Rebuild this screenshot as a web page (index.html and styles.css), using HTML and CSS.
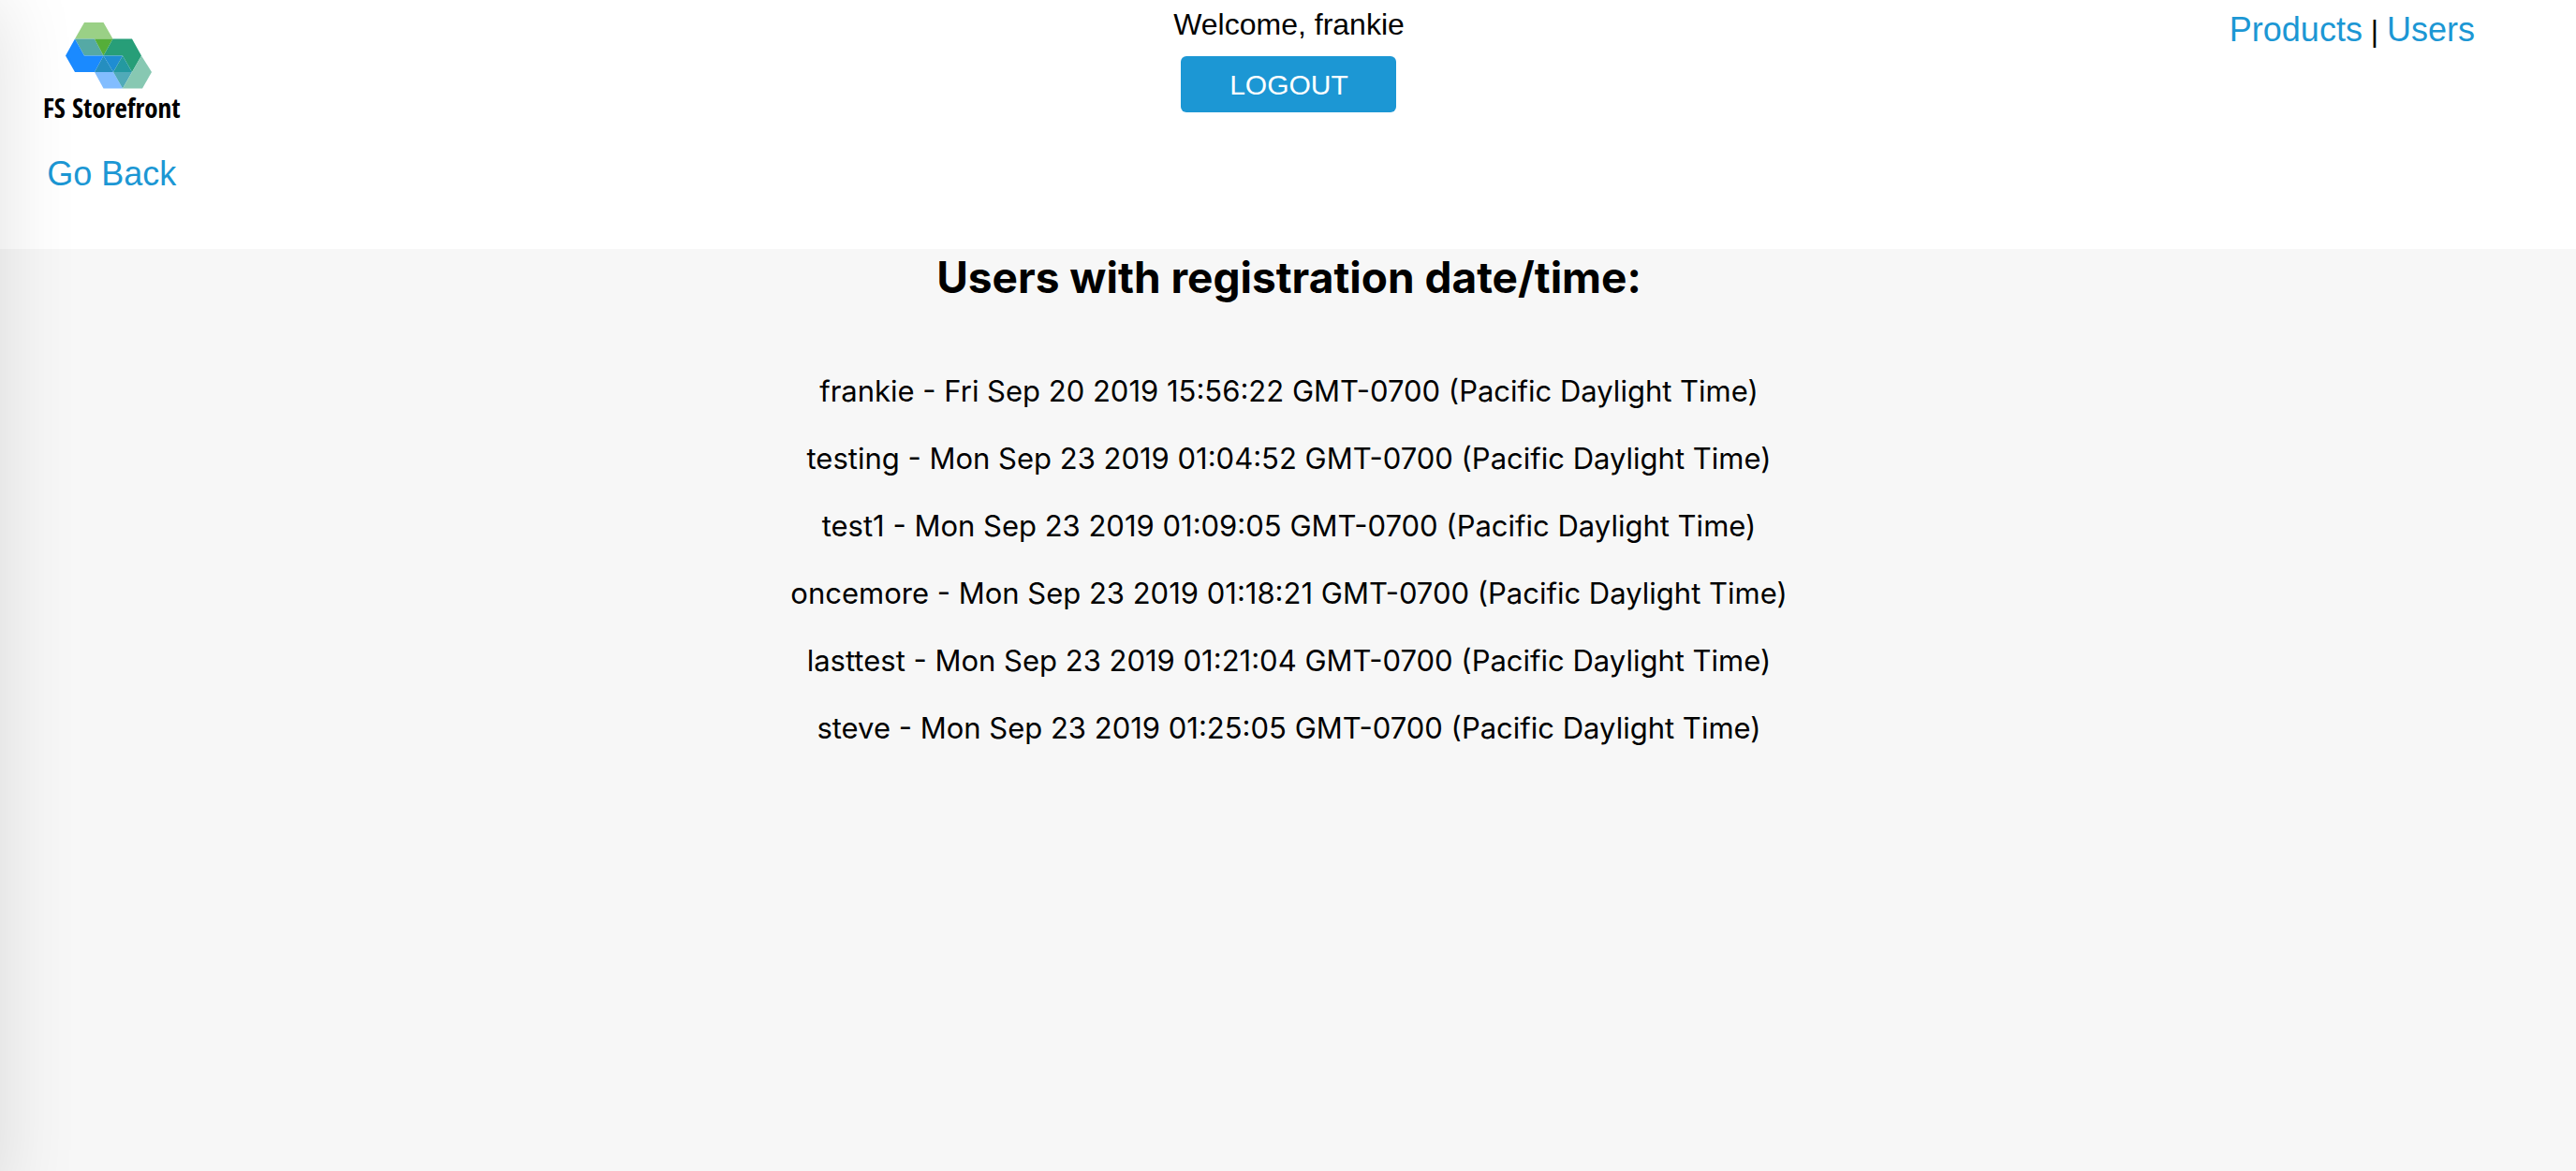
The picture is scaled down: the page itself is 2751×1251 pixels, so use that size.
FILE: index.html
```
<!DOCTYPE html>
<html lang="en">
<head>
<meta charset="utf-8">
<title>FS Storefront</title>
<link rel="stylesheet" href="styles.css">
</head>
<body>
<header class="header">
  <div class="brand">
    <a class="logo" href="#" aria-label="FS Storefront">
      <svg class="logo-mark" viewBox="70 24 92 71" aria-hidden="true">
        <path fill="#9ad086" d="M90 24H110.500L120.500 41.500H80Z"/>
        <path fill="#55a9a5" d="M80 41.500H101L110.500 59.500H90Z"/>
        <path fill="#55ae39" d="M101 41.500H120.500L110.500 59.500Z"/>
        <path fill="#1a8aff" d="M80 41.500L90 59.500H110.500L101 77H80L70 59.500Z"/>
        <path fill="#279e78" d="M120.500 41.500H141L151 59.500L141 77L131 59.500H110.500Z"/>
        <path fill="#258ebf" d="M110.500 59.500L121 77H101Z"/>
        <path fill="#1f8dd2" d="M110.500 59.500H131L121 77Z"/>
        <path fill="#2499a0" d="M131 59.500L141 77H121Z"/>
        <path fill="#82bdff" d="M101 77H121L131 94.500H110.500Z"/>
        <path fill="#50aab8" d="M121 77H141L131 94.500Z"/>
        <path fill="#87c8b2" d="M151 59.500L162 77L152 94.500H131Z"/>
      </svg>
      <span class="logo-name">FS Storefront</span>
    </a>
    <a class="link" href="#">Go Back</a>
  </div>
  <div class="account">
    <span class="welcome">Welcome, frankie</span>
    <button class="logout" type="button">LOGOUT</button>
  </div>
  <nav class="nav"><a class="link" href="#">Products</a> | <a class="link" href="#">Users</a></nav>
</header>
<main class="main">
  <h1 class="title">Users with registration date/time:</h1>
  <ul class="users">
    <li>frankie - Fri Sep 20 2019 15:56:22 GMT-0700 (Pacific Daylight Time)</li>
    <li>testing - Mon Sep 23 2019 01:04:52 GMT-0700 (Pacific Daylight Time)</li>
    <li>test1 - Mon Sep 23 2019 01:09:05 GMT-0700 (Pacific Daylight Time)</li>
    <li>oncemore - Mon Sep 23 2019 01:18:21 GMT-0700 (Pacific Daylight Time)</li>
    <li>lasttest - Mon Sep 23 2019 01:21:04 GMT-0700 (Pacific Daylight Time)</li>
    <li>steve - Mon Sep 23 2019 01:25:05 GMT-0700 (Pacific Daylight Time)</li>
  </ul>
</main>
<div class="drawer"></div>
</body>
</html>
```
FILE: styles.css
```
* {
  box-sizing: border-box;
}

body {
  margin: 0;
  min-height: 100vh;
  background: #f7f7f7;
  color: #000;
  font-family: "Liberation Sans", Arial, sans-serif;
  font-size: 32px;
}

.header {
  display: grid;
  grid-template-columns: 1fr auto 1fr;
  align-items: start;
  padding-bottom: 60px;
  background: #fff;
}

.link {
  color: #1c97d4;
  font-size: 36px;
  line-height: 40px;
  text-decoration: none;
}

.brand {
  display: flex;
  flex-direction: column;
  align-items: center;
  justify-self: start;
  gap: 31px;
  padding: 24px 0 0 46px;
}

.logo {
  display: flex;
  flex-direction: column;
  align-items: flex-start;
  color: #000;
  text-decoration: none;
}

.logo-mark {
  width: 92px;
  height: 71px;
  margin-left: 24px;
}

.logo-name {
  font-family: "Liberation Sans Narrow", "Open Sans Condensed", "Liberation Sans", sans-serif;
  font-size: 29px;
  font-weight: 700;
  line-height: 40px;
}

.account {
  display: flex;
  flex-direction: column;
  align-items: center;
  gap: 14px;
  padding: 6px 0 0 2px;
}

.welcome {
  line-height: 40px;
}

.logout {
  width: 230px;
  height: 60px;
  padding: 2px 0 0;
  border: 0;
  border-radius: 6px;
  background: #1c97d4;
  color: #fff;
  font: inherit;
  font-size: 30px;
}

.nav {
  justify-self: end;
  padding: 12px 108px 0 0;
  line-height: 40px;
}

.main {
  padding-left: 2px;
  font-family: Inter, sans-serif;
  text-align: center;
}

.title {
  margin: 0;
  font-size: 46px;
  font-weight: 700;
  line-height: 60px;
}

.users {
  margin: 56px 0 0;
  padding: 0;
  font-size: 31px;
  line-height: 72px;
  list-style: none;
}

/* Closed side drawer: only its shadow reaches into the page */
.drawer {
  position: fixed;
  top: 0;
  bottom: -40px;
  right: 100%;
  width: 400px;
  box-shadow: 0 0 80px rgba(0, 0, 0, 0.12);
  pointer-events: none;
}
```
